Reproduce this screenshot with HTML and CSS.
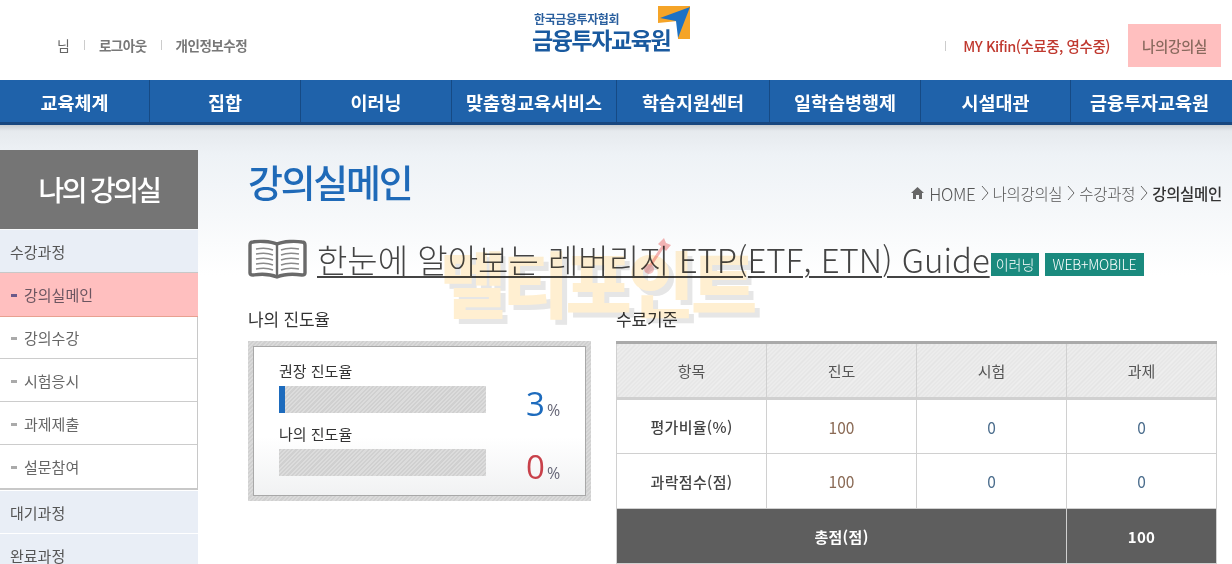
FILE: index.html
```html
<!DOCTYPE html>
<html lang="ko">
<head>
<meta charset="utf-8">
<title>강의실메인</title>
<link rel="stylesheet" href="styles.css">
</head>
<body>
<header class="top">
  <div class="util-left">
    <span class="nim">님</span><i class="sep"></i><span class="util-link">로그아웃</span><i class="sep"></i><span class="util-link">개인정보수정</span>
  </div>
  <div class="logo">
    <div class="logo-text">
      <span class="logo-sub">한국금융투자협회</span>
      <span class="logo-main">금융투자교육원</span>
    </div>
    <svg class="logo-mark" width="33" height="34" viewBox="0 0 33 34">
      <path d="M0 0H32V33H20V15L0 17Z" fill="#f5a428"/>
      <path d="M2 12L32 1L20 32L18 15Z" fill="#1c71c4"/>
    </svg>
  </div>
  <div class="util-right">
    <i class="sep sep-a"></i><span class="kifin">MY Kifin(수료중, 영수중)</span><span class="myroom">나의강의실</span>
  </div>
</header>
<nav class="gnb">
  <a class="w1">교육체계</a><a class="w2">집합</a><a class="w2">이러닝</a><a class="w3">맞춤형교육서비스</a><a class="w2">학습지원센터</a><a class="w2">일학습병행제</a><a class="w2">시설대관</a><a class="w4">금융투자교육원</a>
</nav>
<div class="page">
  <aside class="side">
    <h2 class="side-title">나의 강의실</h2>
    <div class="side-head">수강과정</div>
    <ul class="side-list">
      <li class="on">강의실메인</li>
      <li>강의수강</li>
      <li>시험응시</li>
      <li>과제제출</li>
      <li>설문참여</li>
    </ul>
    <div class="side-head h2">대기과정</div>
    <div class="side-head h2">완료과정</div>
  </aside>
  <main class="main">
    <div class="title-row">
      <h1>강의실메인</h1>
      <div class="crumb">
        <svg class="home" width="13" height="12" viewBox="0 0 13 12"><path d="M6.5 0L13 6H11V12H8V8H5V12H2V6H0Z" fill="#666"/></svg>
        <span class="home-text">HOME</span>
        <svg class="gt" width="8" height="16" viewBox="0 0 8 16"><path d="M1 1L7 8L1 15" fill="none" stroke="#666"/></svg>
        <span>나의강의실</span>
        <svg class="gt" width="8" height="16" viewBox="0 0 8 16"><path d="M1 1L7 8L1 15" fill="none" stroke="#666"/></svg>
        <span>수강과정</span>
        <svg class="gt" width="8" height="16" viewBox="0 0 8 16"><path d="M1 1L7 8L1 15" fill="none" stroke="#666"/></svg>
        <strong>강의실메인</strong>
      </div>
    </div>
    <div class="course">
      <svg class="book" width="59" height="40" viewBox="0 0 59 40">
        <path d="M29 5C22 2 10 2 5 3Q2 3 2 6V34Q2 36 5 36C12 35 22 35 29 38C36 35 47 35 54 36Q57 36 57 34V6Q57 3 54 3C48 2 36 2 29 5Z" fill="#fff" stroke="#6a6a6a" stroke-width="3.4"/>
        <path d="M29 5V38" stroke="#6a6a6a" stroke-width="2.4"/>
        <path d="M8 10C14 9 20 9 25 11M8 15C14 14 20 14 25 16M8 20C14 19 20 19 25 21M8 25C14 24 20 24 25 26M8 30C14 29 20 29 25 31M33 11C38 9 45 9 51 10M33 16C38 14 45 14 51 15M33 21C38 19 45 19 51 20M33 26C38 24 45 24 51 25M33 31C38 29 45 29 51 30" fill="none" stroke="#8a8a8a" stroke-width="1.5"/>
      </svg>
      <span class="course-name">한눈에 알아보는 레버리지 ETP(ETF, ETN) Guide</span>
      <span class="tag">이러닝</span><span class="tag tag2">WEB+MOBILE</span>
    </div>
    <div class="cols">
      <section class="left">
        <h3>나의 진도율</h3>
        <div class="prog-box">
          <div class="prog-inner">
            <div class="prog-row">
              <div class="prog-main">
                <div class="prog-label">권장 진도율</div>
                <div class="bar"><div class="fill" style="width:3%"></div></div>
              </div>
              <div class="pct blue">3<small>%</small></div>
            </div>
            <div class="prog-row r2">
              <div class="prog-main">
                <div class="prog-label">나의 진도율</div>
                <div class="bar"></div>
              </div>
              <div class="pct red">0<small>%</small></div>
            </div>
          </div>
        </div>
      </section>
      <section class="right">
        <h3>수료기준</h3>
        <table class="tbl">
          <thead>
            <tr><th>항목</th><th>진도</th><th>시험</th><th>과제</th></tr>
          </thead>
          <tbody>
            <tr><th>평가비율(%)</th><td class="warm">100</td><td class="cool">0</td><td class="cool">0</td></tr>
            <tr><th>과락점수(점)</th><td class="warm">100</td><td class="cool">0</td><td class="cool">0</td></tr>
            <tr class="total"><th colspan="3">총점(점)</th><th>100</th></tr>
          </tbody>
        </table>
      </section>
    </div>
  </main>
</div>
<div class="watermark">멜티포인트</div>
<svg class="wm-arrow" width="30" height="40" viewBox="0 0 30 40">
  <path d="M4 35L22 8" stroke="#f6b5b5" stroke-width="3"/>
  <path d="M16 7L22 1L24 6L29 8L24 14L20 10Z" fill="#f6b5b5"/>
  <circle cx="7" cy="32" r="5" fill="#f6b5b5" opacity=".8"/>
</svg>
</body>
</html>
```
FILE: styles.css
```css
* { box-sizing: border-box; }
html, body { margin: 0; padding: 0; }
body {
  width: 1232px;
  height: 564px;
  overflow: hidden;
  position: relative;
  background: #fff;
  font-family: "Noto Sans CJK KR", "Noto Sans", sans-serif;
  color: #333;
}
h1, h2, h3, ul { margin: 0; padding: 0; }
li { list-style: none; }

.top {
  height: 80px;
  position: relative;
  display: flex;
  justify-content: space-between;
  align-items: flex-start;
}
.util-left {
  display: flex;
  align-items: center;
  padding: 35px 0 0 57px;
  height: 54px;
}
.nim { color: #666; font-size: 14px; }
.util-link { color: #777; font-size: 13.5px; font-weight: 700; letter-spacing: -0.5px; white-space: nowrap; }
.sep { width: 1px; height: 10px; background: #ccc; margin: 0 14px; flex: none; }
.logo {
  position: absolute;
  left: 532px;
  top: 6px;
  display: flex;
  align-items: flex-start;
}
.logo-text { display: flex; flex-direction: column; width: 126px; }
.logo-sub { font-size: 12px; line-height: 14px; font-weight: 700; color: #2a5f9e; letter-spacing: -0.4px; padding: 6px 0 0 2px; white-space: nowrap; }
.logo-main { font-size: 23px; line-height: 27px; font-weight: 700; color: #1a5a9f; letter-spacing: -1.4px; white-space: nowrap; }
.util-right {
  display: flex;
  align-items: center;
  margin-top: 24px;
  margin-right: 11px;
  height: 43px;
}
.sep-a { margin: 0 17px 0 0; }
.kifin { color: #c0392f; font-size: 14.5px; font-weight: 500; letter-spacing: -0.45px; white-space: nowrap; margin-right: 18px; }
.myroom {
  width: 93px;
  height: 43px;
  background: #ffbfbf;
  color: #8a6a5e;
  font-size: 14.5px;
  font-weight: 500;
  letter-spacing: -0.3px;
  display: flex;
  align-items: center;
  justify-content: center;
  white-space: nowrap;
}

.gnb {
  height: 45px;
  background: #1f62aa;
  border-bottom: 3px solid #18477f;
  display: flex;
}
.gnb a {
  color: #fff;
  font-size: 18.5px;
  font-weight: 700;
  text-align: center;
  line-height: 44px;
  border-right: 1px solid #164a84;
  white-space: nowrap;
  flex: none;
}
.w1 { width: 150px; }
.w2 { width: 151px; }
.gnb .w3 { width: 165px; }
.gnb a:nth-child(5) { width: 153px; }
.gnb a:nth-child(7) { width: 150px; }
.gnb .w4 { width: 161px; border-right: 0; padding-right: 4px; }

.page {
  display: flex;
  height: 439px;
  padding-top: 25px;
  background: linear-gradient(#c9ced2 0, #e6eaee 6px, #eef2f6 30px, #f6f8fa 90px, #ffffff 150px);
}
.side { width: 198px; flex: none; }
.side-title {
  height: 79px;
  background: #757575;
  color: #fff;
  font-size: 28px;
  font-weight: 500;
  letter-spacing: -2.6px;
  text-align: center;
  line-height: 78px;
  white-space: nowrap;
}
.side-head {
  height: 42px;
  margin-top: 1px;
  background: #e9eef6;
  color: #555;
  font-size: 15px;
  line-height: 43px;
  padding-left: 10px;
}
.side-list {
  background: #fff;
  border: 1px solid #c8c8c8;
  border-left: 0;
  border-bottom: 2px solid #c8c8c8;
}
.side-list li {
  height: 43px;
  line-height: 44px;
  font-size: 15px;
  color: #666;
  padding-left: 24px;
  border-bottom: 1px solid #ccc;
  position: relative;
}
.side-list li:last-child { border-bottom: 0; }
.side-list li::before {
  content: "";
  position: absolute;
  left: 11px;
  top: 21px;
  width: 6px;
  height: 3px;
  background: #aaa;
}
.side-list li.on {
  background: #ffbfbf;
  color: #6b5560;
  border-bottom: 1px solid #e8a090;
  margin-right: -1px;
  height: 44px;
  margin-bottom: -1px;
}
.side-list li.on::before { background: #6a5a8a; }

.main { flex: 1; padding: 0 10px 0 50px; min-width: 0; }
.title-row { display: flex; justify-content: space-between; align-items: flex-end; height: 62px; }
h1 {
  color: #1f6ab8;
  font-size: 38px;
  font-weight: 500;
  letter-spacing: -2.3px;
  line-height: 62px;
  white-space: nowrap;
}
.crumb {
  display: flex;
  align-items: center;
  font-size: 15.5px;
  font-weight: 300;
  color: #555;
  letter-spacing: -0.3px;
  height: 20px;
  margin-bottom: 9px;
  white-space: nowrap;
}
.home { margin-right: 5px; }
.home-text { font-size: 17px; }
.crumb strong { font-weight: 500; color: #333; }
.gt { margin: 0 4px 0 5px; flex: none; }
.course { display: flex; align-items: center; height: 44px; margin-top: 25px; }
.book { margin-right: 10px; flex: none; }
.course-name {
  font-size: 33px;
  font-weight: 300;
  line-height: 40px;
  color: #444;
  text-decoration: underline;
  text-decoration-thickness: 2px;
  text-underline-offset: 3px;
  white-space: nowrap;
  width: 674px;
}
.tag {
  background: #1a8a7e;
  color: #fff;
  font-size: 14px;
  font-weight: 300;
  width: 48px;
  height: 23px;
  line-height: 22px;
  text-align: center;
  margin-top: 11px;
  white-space: nowrap;
}
.tag2 { margin-left: 6px; width: 99px; letter-spacing: -0.2px; }

.cols { display: flex; margin-top: 26px; }
.left { width: 368px; flex: none; }
.right { flex: 1; min-width: 0; }
h3 {
  font-size: 17px;
  font-weight: 400;
  color: #333;
  line-height: 24px;
  height: 34px;
  letter-spacing: -0.2px;
}
.prog-box {
  width: 343px;
  height: 160px;
  padding: 5px;
  background: repeating-linear-gradient(135deg, #d0d0d0 0 1.5px, #dadada 1.5px 3px);
}
.prog-inner {
  height: 150px;
  border: 1px solid #a8a8a8;
  background: linear-gradient(#fff 0, #fff 90px, #f1f2f3 148px);
  padding: 14px 25px 0;
}
.prog-row { display: flex; height: 64px; }
.prog-row.r2 { margin-top: -1px; }
.prog-main { width: 207px; flex: none; }
.prog-label { font-size: 15px; line-height: 20px; height: 25px; color: #333; white-space: nowrap; }
.bar {
  height: 27px;
  background: repeating-linear-gradient(135deg, #d0d0d0 0 1.5px, #dcdcdc 1.5px 3px);
}
.fill { height: 100%; background: #1d6bbd; min-width: 6px; }
.pct {
  font-size: 33px;
  line-height: 40px;
  margin-left: 40px;
  padding-top: 23px;
  white-space: nowrap;
  font-family: "Open Sans", "Noto Sans", sans-serif;
}
.pct small { font-size: 16px; color: #667; margin-left: 2px; }
.blue { color: #1d6bbd; }
.red { color: #c8414a; }

.tbl {
  width: 601px;
  border-collapse: collapse;
  table-layout: fixed;
  border-top: 3px solid #aaa;
  font-size: 15px;
}
.tbl th, .tbl td {
  border: 1px solid #d0d0d0;
  text-align: center;
  font-weight: 400;
  height: 55px;
  padding: 0;
  color: #555;
}
.tbl thead th {
  height: 56px;
  background: repeating-linear-gradient(135deg, #e4e4e4 0 1.5px, #efefef 1.5px 3px);
  border-bottom: 3px solid #d0d0d0;
}
.tbl tbody th { font-weight: 500; color: #444; background: #fff; letter-spacing: 0.3px; }
.tbl td { font-size: 15.5px; }
.warm { color: #8a6a55 !important; }
.cool { color: #4a6c8c !important; }
.tbl tr.total th {
  background: #5e5e5e;
  color: #fff;
  font-weight: 700;
  border: 1px solid #d0d0d0;
}

.watermark {
  position: absolute;
  left: 440px;
  top: 238px;
  font-size: 72px;
  font-weight: 900;
  line-height: 86px;
  letter-spacing: -3.5px;
  color: #ffe7b8;
  text-shadow: 5px 5px 0 #d8d8d8;
  white-space: nowrap;
  pointer-events: none;
  mix-blend-mode: multiply;
  opacity: 0.65;
}
.wm-arrow {
  position: absolute;
  left: 642px;
  top: 237px;
  mix-blend-mode: multiply;
}
```
